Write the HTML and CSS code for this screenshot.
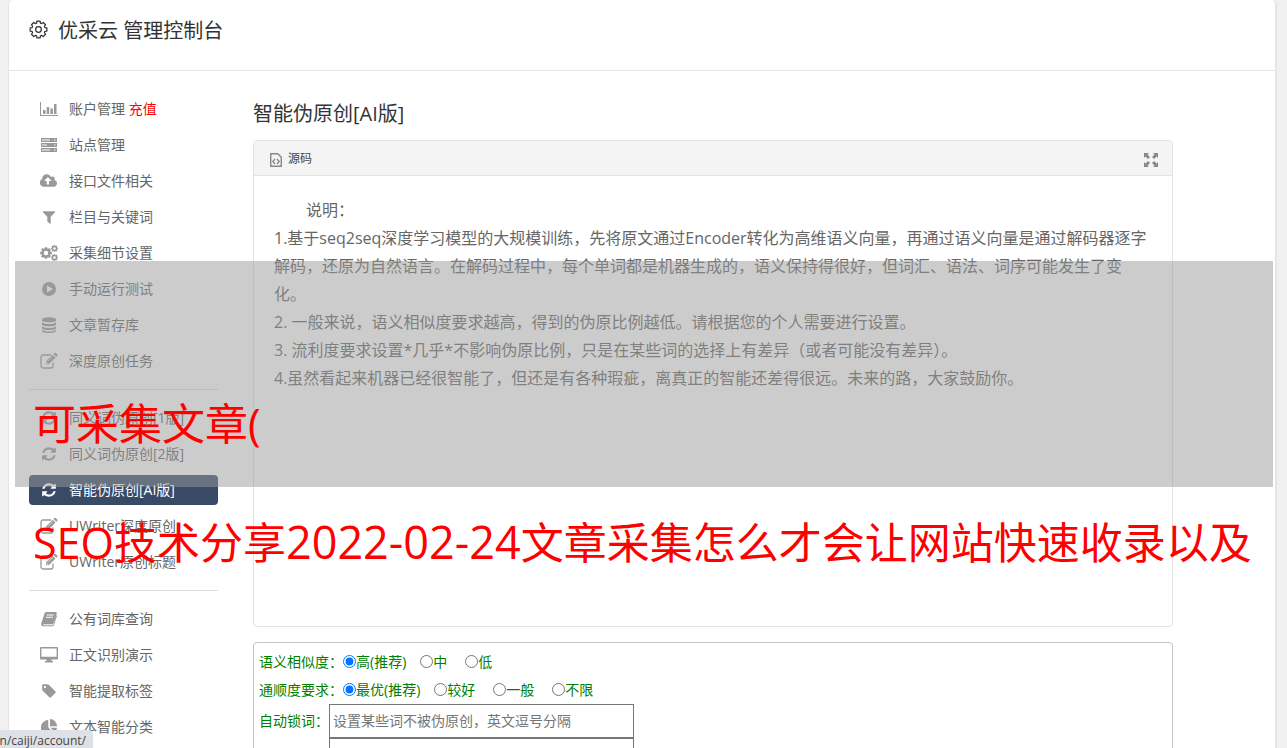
FILE: index.html
```html
<!DOCTYPE html>
<html lang="zh-CN">
<head>
    <meta charset="UTF-8">
    <meta name="viewport" content="width=device-width, initial-scale=1.0">
    <title>优采云 管理控制台</title>
    <link rel="stylesheet" href="styles.css">
</head>
<body>
    <!-- Icon shapes -->
    <svg class="sprite" aria-hidden="true">
        <symbol id="gear" viewBox="-10 -10 20 20">
            <path d="M8.8-1.7V1.7L6.7 2 6.2 3.3 7.4 5 5 7.4 3.3 6.2 2 6.7 1.7 8.8H-1.7L-2 6.7-3.3 6.2-5 7.4-7.4 5-6.2 3.3-6.7 2-8.8 1.7V-1.7L-6.7-2-6.2-3.3-7.4-5-5-7.4-3.3-6.2-2-6.7-1.7-8.8H1.7L2-6.7 3.3-6.2 5-7.4 7.4-5 6.2-3.3 6.7-2Z"/>
            <circle r="3"/>
        </symbol>
        <symbol id="cog" viewBox="-9 -9 18 18">
            <path fill-rule="evenodd" d="M8.8-1.7V1.7L6.7 2 6.2 3.3 7.4 5 5 7.4 3.3 6.2 2 6.7 1.7 8.8H-1.7L-2 6.7-3.3 6.2-5 7.4-7.4 5-6.2 3.3-6.7 2-8.8 1.7V-1.7L-6.7-2-6.2-3.3-7.4-5-5-7.4-3.3-6.2-2-6.7-1.7-8.8H1.7L2-6.7 3.3-6.2 5-7.4 7.4-5 6.2-3.3 6.7-2ZM-3.400 0a3.400 3.400 0 1 0 6.800 0a3.400 3.400 0 1 0-6.800 0Z"/>
        </symbol>
        <symbol id="refresh" viewBox="0 0 1792 1792">
            <path d="M1639 1056q0 5-1 7-64 268-268 434.500t-478 166.500q-146 0-282.500-55t-243.500-157l-129 129q-19 19-45 19t-45-19-19-45v-448q0-26 19-45t45-19h448q26 0 45 19t19 45-19 45l-137 137q71 66 161 102t187 36q134 0 250-65t186-179q11-17 53-117 8-23 30-23h192q13 0 22.500 9.500t9.500 22.500zm25-800v448q0 26-19 45t-45 19h-448q-26 0-45-19t-19-45 19-45l138-138q-148-137-349-137-134 0-250 65t-186 179q-11 17-53 117-8 23-30 23h-199q-13 0-22.500-9.500t-9.500-22.500v-7q65-268 270-434.500t480-166.500q146 0 284 55.500t245 156.500l130-129q19-19 45-19t45 19 19 45z"/>
        </symbol>
        <symbol id="edit" viewBox="0 0 18 16">
            <path d="M13 9.500V13a2 2 0 0 1-2 2H3a2 2 0 0 1-2-2V4a2 2 0 0 1 2-2H11" fill="none" stroke="currentColor" stroke-width="1.300"/>
            <path d="M6 8.500 12.700 1.800 15.500 4.600 8.800 11.300H6ZM13.500 1l1-1q.6-.5 1.200 0l1.600 1.600q.5.6 0 1.200l-1 1Z"/>
            <path d="M7 8.800v1.600H8.500M8.300 8l4.600-4.600" fill="none" stroke="#fff" stroke-width=".6"/>
        </symbol>
    </svg>

    <div class="page">
        <header class="header">
            <svg class="header-icon"><use href="#gear"/></svg>
            <h1>优采云 管理控制台</h1>
        </header>

        <div class="content">
            <!-- Sidebar -->
            <nav class="sidebar">
                <a href="#"><svg viewBox="0 0 18 16"><path d="M0 1h1v13h17v1H0ZM3 9h2.500v4H3Zm3.700-3h2.500v7H6.700Zm3.700 1.500h2.500V13h-2.500ZM14 3h2.500v10H14Z"/></svg>账户管理 <span class="recharge">充值</span></a>
                <a href="#"><svg viewBox="0 0 18 16"><path fill-rule="evenodd" d="M1 1h16v4H1Zm1 1.500v1h8v-1Zm12 0v1h1.500v-1ZM1 6h16v4H1Zm1 1.500v1h5v-1Zm12 0v1h1.500v-1ZM1 11h16v4H1Zm1 1.500v1h8v-1Zm12 0v1h1.500v-1Z"/></svg>站点管理</a>
                <a href="#"><svg viewBox="0 0 1920 1792"><path d="M1216 864q0-14-9-23l-352-352q-9-9-23-9t-23 9l-351 351q-10 12-10 24 0 14 9 23t23 9h224v352q0 13 9.500 22.500t22.500 9.500h192q13 0 22.500-9.500t9.500-22.500v-352h224q13 0 22.500-9.500t9.500-22.500zm640 288q0 159-112.500 271.500t-271.500 112.500h-1088q-185 0-316.500-131.500t-131.500-316.500q0-130 70-240t188-165q-2-30-2-43 0-212 150-362t362-150q156 0 285.500 87t188.500 231q71-62 166-62 106 0 181 75t75 181q0 76-41 138 130 31 213.500 135.500t83.500 238.500z"/></svg>接口文件相关</a>
                <a href="#"><svg viewBox="0 0 1792 1792"><path d="M1595 295q17 41-14 70l-493 493v742q0 42-39 59-13 5-25 5-27 0-45-19l-256-256q-19-19-19-45v-486l-493-493q-31-29-14-70 17-39 59-39h1280q42 0 59 39z"/></svg>栏目与关键词</a>
                <a href="#"><svg viewBox="0 0 18 16"><use href="#cog" x="0" y="2" width="12" height="12"/><use href="#cog" x="11" y="0" width="7" height="7"/><use href="#cog" x="11" y="9" width="7" height="7"/></svg>采集细节设置</a>
                <a href="#"><svg viewBox="0 0 18 16"><path fill-rule="evenodd" d="M9 1a7 7 0 1 1 0 14A7 7 0 0 1 9 1ZM7 4.500v7L13 8Z"/></svg>手动运行测试</a>
                <a href="#"><svg viewBox="0 0 18 16"><path d="M2 2.500C2-.5 16-.5 16 2.500v1C16 6 2 6 2 3.500ZM2 5.500q7 3 14 0v2C16 10 2 10 2 7.500ZM2 9.500q7 3 14 0v1.700c0 2.500-14 2.500-14 0ZM2 13q7 3 14 0v1c0 2.700-14 2.700-14 0Z"/></svg>文章暂存库</a>
                <a href="#"><svg><use href="#edit"/></svg>深度原创任务</a>
                <hr>
                <a href="#"><svg><use href="#refresh"/></svg>同义词伪原创[1版]</a>
                <a href="#"><svg><use href="#refresh"/></svg>同义词伪原创[2版]</a>
                <a href="#" class="active"><svg><use href="#refresh"/></svg>智能伪原创[AI版]</a>
                <a href="#"><svg><use href="#edit"/></svg>UWriter深度原创</a>
                <a href="#"><svg><use href="#edit"/></svg>UWriter原创标题</a>
                <hr>
                <a href="#"><svg viewBox="0 0 18 16"><path fill-rule="evenodd" d="M6 1h10q1 .3.700 1.500L13.500 12q-.4 1.200-1.500 1.200H3.500q-.8.300 0 1H13L16.300 4q.9.500.5 1.500L14 14q-.5 1.300-1.600 1.300H3Q.7 15 1.300 12.500L4.500 2.500Q5 1 6 1Zm.8 2.500-.3 1h7l.3-1Zm-.7 2.300-.3 1h7l.3-1Z"/></svg>公有词库查询</a>
                <a href="#"><svg viewBox="0 0 18 16"><path fill-rule="evenodd" d="M1 0h16q1 0 1 1v10.500q0 1-1 1h-5.500V14H13v1.500H5V14h1.500v-1.500H1q-1 0-1-1V1q0-1 1-1Zm.4 1.400v8.300h15.200V1.400Z"/></svg>正文识别演示</a>
                <a href="#"><svg viewBox="0 0 1792 1792"><path d="M576 448q0-53-37.500-90.500t-90.500-37.500-90.500 37.500-37.500 90.500 37.500 90.500 90.500 37.500 90.500-37.500 37.500-90.500zm1067 576q0 53-37 90l-491 492q-39 37-91 37-53 0-90-37l-715-716q-38-37-64.500-101t-26.500-117v-416q0-52 38-90t90-38h416q53 0 117 26.500t102 64.500l715 714q37 39 37 91z"/></svg>智能提取标签</a>
                <a href="#"><svg viewBox="0 0 18 16"><path d="M8.300 1v7.500l5.200 5.200A7.400 7.400 0 1 1 8.300 1ZM10 0a7.300 7.300 0 0 1 7 7.200h-7ZM10.500 8.700H17a7 7 0 0 1-2 4.500Z"/></svg>文本智能分类</a>
            </nav>

            <!-- Editor and options -->
            <main class="main">
                <h2>智能伪原创[AI版]</h2>

                <section class="editor">
                    <div class="toolbar">
                        <button type="button" class="source">
                            <svg viewBox="0 0 12 14"><path d="M.7.700h7l3.600 3.600v9H.7Z" fill="none" stroke="currentColor" stroke-width="1.400"/><path d="M5 6 2.800 8.500 5 11M7 6l2.200 2.500L7 11" fill="none" stroke="currentColor" stroke-width="1.300"/></svg>
                            源码
                        </button>
                        <button type="button" class="fullscreen" aria-label="全屏">
                            <svg viewBox="0 0 14 14"><path d="M0 0h5L3.500 1.500 6 4 4 6 1.500 3.500 0 5ZM14 0v5l-1.500-1.500L10 6 8 4l2.500-2.500L9 0ZM0 14V9l1.500 1.500L4 8l2 2-2.500 2.500L5 14ZM14 14H9l1.500-1.500L8 10l2-2 2.500 2.500L14 9Z"/></svg>
                        </button>
                    </div>
                    <div class="editor-body">
                        <p class="indent">说明<span class="colon">：</span></p>
                        <p>1.基于seq2seq深度学习模型的大规模训练，先将原文通过Encoder转化为高维语义向量，再通过语义向量是通过解码器逐字<br>解码，还原为自然语言。在解码过程中，每个单词都是机器生成的，语义保持得很好，但词汇、语法、词序可能发生了变<br>化。</p>
                        <p>2. 一般来说，语义相似度要求越高，得到的伪原比例越低。请根据您的个人需要进行设置。</p>
                        <p>3. 流利度要求设置*几乎*不影响伪原比例，只是在某些词的选择上有差异（或者可能没有差异）。</p>
                        <p>4.虽然看起来机器已经很智能了，但还是有各种瑕疵，离真正的智能还差得很远。未来的路，大家鼓励你。</p>
                    </div>
                </section>

                <form class="options">
                    <div class="row">
                        <span>语义相似度<span class="colon">：</span></span>
                        <label class="recommended"><input type="radio" name="similar" checked>高(推荐)</label>
                        <label><input type="radio" name="similar">中</label>
                        <label><input type="radio" name="similar">低</label>
                    </div>
                    <div class="row">
                        <span>通顺度要求<span class="colon">：</span></span>
                        <label class="recommended"><input type="radio" name="fluency" checked>最优(推荐)</label>
                        <label><input type="radio" name="fluency">较好</label>
                        <label><input type="radio" name="fluency">一般</label>
                        <label><input type="radio" name="fluency">不限</label>
                    </div>
                    <div class="lock-words">
                        <label for="lockWords">自动锁词<span class="colon">：</span></label>
                        <div class="fields">
                            <input type="text" id="lockWords" placeholder="设置某些词不被伪原创，英文逗号分隔">
                            <textarea aria-label="锁词列表"></textarea>
                        </div>
                    </div>
                </form>
            </main>
        </div>
    </div>

    <!-- Title banner over the page -->
    <div class="banner">
        <p>可采集文章(</p>
        <p>SEO技术分享<span class="date">2022-02-24</span>文章采集怎么才会让网站快速收录以及</p>
    </div>

    <div class="status"><span>n/caiji/account/</span></div>
</body>
</html>
```

FILE: styles.css
```css
* {
    margin: 0;
    padding: 0;
    box-sizing: border-box;
}

body {
    font-family: "Open Sans", "Noto Sans CJK SC", sans-serif;
    font-size: 14px;
    color: #666;
    background-color: #f0f0f0;
    height: 100vh;
    overflow: hidden;
    padding: 0 10px 0 8px;
}

.sprite {
    display: none;
}

svg {
    fill: currentColor;
}

/* centred full-width colon */
.colon {
    font-family: "Noto Sans CJK TC", sans-serif;
    line-height: 1;
}

.page {
    background-color: white;
    border: solid #e5e5e5;
    border-width: 0 2px 0 1px;
    border-radius: 5px 5px 0 0;
    min-height: 100vh;
}

.header {
    display: flex;
    gap: 10px;
    height: 71px;
    padding: 16px 20px;
    border-bottom: 1px solid #e5e5e5;
    color: #333;
}

.header-icon {
    width: 19px;
    height: 19px;
    margin-top: 4px;
    fill: none;
    stroke: #333;
    stroke-width: 1.3;
    stroke-linejoin: round;
}

h1,
h2 {
    font-size: 20px;
    font-weight: 400;
    line-height: 30px;
    color: #333;
}

.content {
    display: flex;
    gap: 35px;
    padding: 23px 102px 0 20px;
}

.sidebar {
    flex: 0 0 189px;
}

.sidebar a {
    display: flex;
    align-items: center;
    height: 30px;
    margin-bottom: 6px;
    padding: 0 0 2px 11px;
    border-radius: 4px;
    color: #666;
    text-decoration: none;
    white-space: pre;
}

.sidebar a svg {
    width: 18px;
    height: 16px;
    margin: 2px 11px 0 0;
    color: #999;
}

.sidebar .active,
.sidebar .active svg {
    color: white;
}

.sidebar .active {
    background-color: #394a66;
}

.sidebar hr {
    border: 0;
    border-top: 1px solid #ddd;
    margin: 13px 0;
}

.recharge {
    color: red;
}

.main {
    flex: 1;
    min-width: 0;
}

.main h2 {
    margin: 5px 0 11px;
}

.editor {
    border: 1px solid #e3e3e3;
    border-radius: 4px;
}

.toolbar {
    display: flex;
    justify-content: space-between;
    align-items: center;
    height: 35px;
    padding: 0 14px 0 15px;
    background-color: #f4f4f4;
    border-bottom: 1px solid #e3e3e3;
    border-radius: 4px 4px 0 0;
}

.toolbar button {
    display: flex;
    align-items: center;
    border: none;
    background: none;
    font: inherit;
    font-size: 12px;
    color: #444;
    cursor: pointer;
}

.toolbar svg {
    width: 14px;
    height: 14px;
    margin-top: 3px;
    color: #888;
}

.source {
    gap: 5px;
}

.editor-body {
    min-height: 450px;
    padding: 20px;
    font-size: 16px;
    line-height: 28px;
    white-space: nowrap;
}

.indent {
    text-indent: 2em;
}

.options {
    margin-top: 15px;
    padding: 4px 5px;
    border: 1px solid #c4c4c4;
    border-radius: 4px;
    color: green;
}

.row {
    display: flex;
    height: 28px;
    align-items: center;
}

.row label {
    display: flex;
    align-items: center;
    margin-right: 18px;
}

.row .recommended {
    margin-right: 14px;
}

.row input {
    width: 13px;
    height: 13px;
}

.lock-words {
    display: flex;
    margin-top: 1px;
    line-height: 34px;
}

.fields {
    display: flex;
    flex-direction: column;
    width: 305px;
}

.fields input,
.fields textarea {
    height: 34px;
    padding: 0 3px;
    border: 1px solid #767676;
    font: inherit;
}

.fields input::placeholder {
    color: #757575;
}

.banner {
    position: absolute;
    top: 261px;
    left: 15px;
    right: 14px;
    height: 226px;
    padding: 103px 18px 0;
    background-color: rgba(153, 153, 153, 0.5);
    color: red;
    font-size: 43px;
    line-height: 119px;
    white-space: nowrap;
}

.date {
    font-size: 45px;
    line-height: 1;
}

.status {
    position: fixed;
    bottom: 0;
    left: 0;
    display: flex;
    justify-content: flex-end;
    width: 93px;
    padding: 3px 7px 0;
    overflow: hidden;
    background-color: #dee1e6;
    border-radius: 0 4px 0 0;
    color: #444;
    font-size: 12px;
    line-height: 15px;
}
```
